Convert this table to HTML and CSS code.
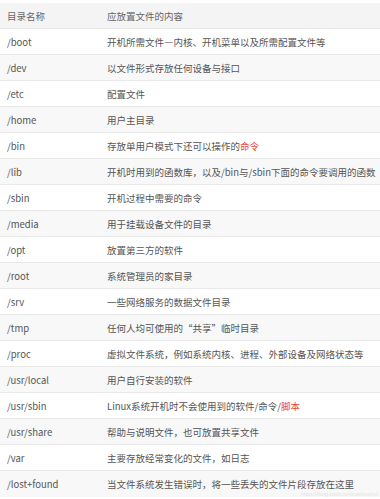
FILE: index.html
```html
<!DOCTYPE html>
<html lang="zh">
<head>
<meta charset="utf-8">
<link rel="stylesheet" href="styles.css">
</head>
<body>
<div class="table">
  <div class="row head"><div class="c1">目录名称</div><div class="c2">应放置文件的内容</div></div>
  <div class="row"><div class="c1">/boot</div><div class="c2">开机所需文件—内核、开机菜单以及所需配置文件等</div></div>
  <div class="row alt"><div class="c1">/dev</div><div class="c2">以文件形式存放任何设备与接口</div></div>
  <div class="row"><div class="c1">/etc</div><div class="c2">配置文件</div></div>
  <div class="row alt"><div class="c1">/home</div><div class="c2">用户主目录</div></div>
  <div class="row"><div class="c1">/bin</div><div class="c2">存放单用户模式下还可以操作的<span class="red">命令</span></div></div>
  <div class="row alt"><div class="c1">/lib</div><div class="c2">开机时用到的函数库，以及/bin与/sbin下面的命令要调用的函数</div></div>
  <div class="row"><div class="c1">/sbin</div><div class="c2">开机过程中需要的命令</div></div>
  <div class="row alt"><div class="c1">/media</div><div class="c2">用于挂载设备文件的目录</div></div>
  <div class="row"><div class="c1">/opt</div><div class="c2">放置第三方的软件</div></div>
  <div class="row alt"><div class="c1">/root</div><div class="c2">系统管理员的家目录</div></div>
  <div class="row"><div class="c1">/srv</div><div class="c2">一些网络服务的数据文件目录</div></div>
  <div class="row alt"><div class="c1">/tmp</div><div class="c2">任何人均可使用的“共享”临时目录</div></div>
  <div class="row"><div class="c1">/proc</div><div class="c2">虚拟文件系统，例如系统内核、进程、外部设备及网络状态等</div></div>
  <div class="row alt"><div class="c1">/usr/local</div><div class="c2">用户自行安装的软件</div></div>
  <div class="row"><div class="c1">/usr/sbin</div><div class="c2">Linux系统开机时不会使用到的软件/命令/<span class="red">脚本</span></div></div>
  <div class="row alt"><div class="c1">/usr/share</div><div class="c2">帮助与说明文件，也可放置共享文件</div></div>
  <div class="row"><div class="c1">/var</div><div class="c2">主要存放经常变化的文件，如日志</div></div>
  <div class="row alt last"><div class="c1">/lost+found</div><div class="c2">当文件系统发生错误时，将一些丢失的文件片段存放在这里</div><span class="mark">https://blog.csdn.net/mathewlyd</span></div>
</div>
</body>
</html>
```

FILE: styles.css
```css
html, body {
  margin: 0;
  padding: 0;
  background: #fff;
}
body {
  padding-top: 3px;
  font-family: "Noto Sans CJK SC", "Noto Sans", sans-serif;
  font-size: 9.5px;
  color: #555;
}
.table {
  display: flex;
  flex-direction: column;
}
.row {
  display: flex;
  align-items: center;
  height: 25px;
  border-bottom: 1px solid #e9e9e9;
  background: #fff;
  position: relative;
}
.row.alt {
  background: #f8f8f8;
}
.row.head {
  height: 25px;
  background: #f4f4f4;
  color: #666;
}
.row.last {
  border-bottom: none;
  align-items: flex-start;
  padding-top: 6px;
  height: 20px;
}
.c1 {
  width: 100px;
  padding-left: 7px;
  flex-shrink: 0;
  white-space: nowrap;
}
.c2 {
  white-space: nowrap;
}
.red {
  color: #e8453c;
}
.mark {
  position: absolute;
  right: 2px;
  bottom: 0;
  font-size: 5.5px;
  line-height: 6px;
  color: #e4e4e4;
  font-family: "Liberation Sans", sans-serif;
}
```
